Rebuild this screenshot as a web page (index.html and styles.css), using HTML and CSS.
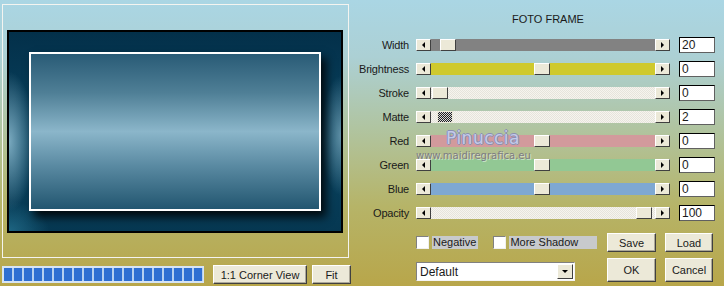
FILE: index.html
```html
<!DOCTYPE html>
<html lang="en">
  <head>
    <meta charset="UTF-8" />
    <title>Foto Frame</title>
    <link rel="stylesheet" href="styles.css">
  </head>
  <body>
    <div class="dialog">
      <div class="left">
        <div class="preview">
          <div class="frame">
            <div class="photo"></div>
          </div>
        </div>
        <div class="preview-bar">
          <div class="progress"></div>
          <button class="btn corner">1:1 Corner View</button>
          <button class="btn fit">Fit</button>
        </div>
      </div>

      <div class="right">
        <div class="title">FOTO FRAME</div>

        <div class="row">
          <div class="label">Width</div>
          <div class="slider">
            <span class="arrow arrow-left"></span>
            <div class="track gray"><span class="thumb" style="margin-left: 9px"></span></div>
            <span class="arrow arrow-right"></span>
          </div>
          <div class="value">20</div>
        </div>
        <div class="row">
          <div class="label">Brightness</div>
          <div class="slider">
            <span class="arrow arrow-left"></span>
            <div class="track yellow"><span class="thumb" style="margin-left: 103px"></span></div>
            <span class="arrow arrow-right"></span>
          </div>
          <div class="value">0</div>
        </div>
        <div class="row">
          <div class="label">Stroke</div>
          <div class="slider">
            <span class="arrow arrow-left"></span>
            <div class="track hatch"><span class="thumb" style="margin-left: 1px"></span></div>
            <span class="arrow arrow-right"></span>
          </div>
          <div class="value">0</div>
        </div>
        <div class="row">
          <div class="label">Matte</div>
          <div class="slider">
            <span class="arrow arrow-left"></span>
            <div class="track hatch"><span class="thumb checker" style="margin-left: 6px"></span></div>
            <span class="arrow arrow-right"></span>
          </div>
          <div class="value">2</div>
        </div>
        <div class="row">
          <div class="label">Red</div>
          <div class="slider">
            <span class="arrow arrow-left"></span>
            <div class="track red"><span class="thumb" style="margin-left: 103px"></span></div>
            <span class="arrow arrow-right"></span>
          </div>
          <div class="value">0</div>
        </div>
        <div class="row">
          <div class="label">Green</div>
          <div class="slider">
            <span class="arrow arrow-left"></span>
            <div class="track green"><span class="thumb" style="margin-left: 103px"></span></div>
            <span class="arrow arrow-right"></span>
          </div>
          <div class="value">0</div>
        </div>
        <div class="row">
          <div class="label">Blue</div>
          <div class="slider">
            <span class="arrow arrow-left"></span>
            <div class="track blue"><span class="thumb" style="margin-left: 103px"></span></div>
            <span class="arrow arrow-right"></span>
          </div>
          <div class="value">0</div>
        </div>
        <div class="row">
          <div class="label">Opacity</div>
          <div class="slider">
            <span class="arrow arrow-left"></span>
            <div class="track hatch"><span class="thumb" style="margin-left: 205px"></span></div>
            <span class="arrow arrow-right"></span>
          </div>
          <div class="value">100</div>
        </div>

        <div class="actions">
          <div class="checks">
            <div class="check"><span class="box"></span><span class="caption">Negative</span></div>
            <div class="check"><span class="box"></span><span class="caption wide">More Shadow</span></div>
          </div>
          <button class="btn">Save</button>
          <button class="btn">Load</button>
          <div class="select">
            <span class="select-text">Default</span>
            <span class="drop"></span>
          </div>
          <button class="btn tall">OK</button>
          <button class="btn tall">Cancel</button>
        </div>

        <!--watermark over the sliders-->
        <div class="watermark">
          <div class="wm-name">Pinuccia</div>
          <div class="wm-site">www.maidiregrafica.eu</div>
        </div>
      </div>
    </div>
  </body>
</html>
```

FILE: styles.css
```css
body {
  margin: 0;
  padding: 0;
  width: 724px;
  height: 286px;
  overflow: hidden;
  font-family: "Liberation Sans", Arial, sans-serif;
  font-size: 11px;
  color: #1a1a1a;
  background: linear-gradient(to bottom, #aad6e4 0%, #acd0d4 20%, #b0c4a0 45%, #b6b468 72%, #b8a64a 100%);
}
.dialog {
  display: flex;
  height: 286px;
}

/* preview side */
.left {
  width: 352px;
  box-sizing: border-box;
  padding: 4px 0 0 2px;
  display: flex;
  flex-direction: column;
}
.preview {
  width: 347px;
  height: 254px;
  box-sizing: border-box;
  border: 1px solid #f4f4f0;
  padding: 25px 0 0 4px;
}
.frame {
  width: 336px;
  height: 203px;
  box-sizing: border-box;
  border: 2px solid #000;
  padding: 20px;
  background:
    radial-gradient(ellipse 26px 70px at 0% 55%, rgba(150, 195, 215, 0.8), rgba(150, 195, 215, 0)),
    radial-gradient(ellipse 20px 60px at 100% 52%, rgba(130, 175, 195, 0.7), rgba(130, 175, 195, 0)),
    radial-gradient(ellipse 40px 30px at 0% 100%, rgba(40, 120, 150, 0.7), rgba(40, 120, 150, 0)),
    linear-gradient(to bottom, #03304a, #0a4460 55%, #063852);
}
.photo {
  width: 292px;
  height: 159px;
  box-sizing: border-box;
  border: 2px solid #fff;
  background: linear-gradient(to bottom, #295b76 0%, #4f7f96 25%, #8bb6ca 50%, #5a8aa2 72%, #225670 100%);
  box-shadow: 5px 6px 9px rgba(0, 0, 0, 0.85);
}
.preview-bar {
  display: flex;
  align-items: center;
  margin-top: 7px;
}
.progress {
  width: 202px;
  height: 17px;
  box-sizing: border-box;
  padding: 2px 1px 2px 2px;
  background:
    repeating-linear-gradient(to right, #2f6fd2 0 8px, #b6d0f0 8px 10px) content-box,
    #d6e4f4;
}
.corner {
  width: 94px;
  height: 19px;
  margin-left: 9px;
}
.fit {
  width: 39px;
  height: 19px;
  margin-left: 5px;
}

/* classic buttons */
.btn {
  font-family: "Liberation Sans", Arial, sans-serif;
  font-size: 11px;
  color: #1a1a1a;
  background: #ece9d8;
  border: 1px solid;
  border-color: #fff #404040 #404040 #fff;
  box-shadow: inset -1px -1px #aca899;
  padding: 0;
  height: 19px;
}
.btn.tall {
  height: 24px;
}

/* controls side */
.right {
  flex: 1;
  position: relative;
}
.title {
  width: 264px;
  margin-left: 64px;
  padding-top: 12px;
  line-height: 15px;
  text-align: center;
  margin-bottom: 6px;
}
.row {
  display: flex;
  align-items: center;
  height: 24px;
}
.label {
  width: 57px;
  text-align: right;
  letter-spacing: -0.2px;
}
.slider {
  display: flex;
  margin-left: 7px;
  height: 12px;
}
.arrow {
  width: 15px;
  height: 12px;
  box-sizing: border-box;
  background: #ece9d8;
  border: 1px solid;
  border-color: #fff #404040 #404040 #fff;
  display: flex;
  align-items: center;
  justify-content: center;
}
.arrow-left::before {
  content: "";
  border-top: 3px solid transparent;
  border-bottom: 3px solid transparent;
  border-right: 3px solid #000;
}
.arrow-right::before {
  content: "";
  border-top: 3px solid transparent;
  border-bottom: 3px solid transparent;
  border-left: 3px solid #000;
}
.track {
  width: 224px;
  height: 12px;
  display: flex;
}
.track.gray {
  background: #828282;
}
.track.yellow {
  background: #cfc92e;
}
.track.red {
  background: #d29a9c;
}
.track.green {
  background: #92c894;
}
.track.blue {
  background: #7ea8d2;
}
.track.hatch {
  background: repeating-conic-gradient(#f6f4ee 0 25%, #e6e4dc 0 50%) 0 0 / 2px 2px;
}
.thumb {
  width: 16px;
  height: 12px;
  box-sizing: border-box;
  background: #ece9d8;
  border: 1px solid;
  border-color: #fff #404040 #404040 #fff;
}
.thumb.checker {
  border: 1px solid #ece9d8;
  background: repeating-conic-gradient(#202020 0 25%, #d8d8d8 0 50%) 0 0 / 2px 2px;
}
.value {
  width: 36px;
  height: 16px;
  box-sizing: border-box;
  margin-left: 9px;
  background: #fff;
  border: 1px solid #000;
  border-right-color: #606060;
  border-bottom-color: #606060;
  padding-left: 2px;
  font-size: 12px;
  line-height: 14px;
}

/* bottom block */
.actions {
  display: grid;
  grid-template-columns: 182px 49px 48px;
  grid-template-rows: 19px 24px;
  column-gap: 9px;
  row-gap: 6px;
  margin: 8px 0 0 64px;
}
.checks {
  display: flex;
  align-items: center;
}
.check {
  display: flex;
  align-items: center;
  margin-right: 15px;
}
.box {
  width: 13px;
  height: 13px;
  box-sizing: border-box;
  background: #fff;
  border: 1px solid;
  border-color: #808080 #f0f0f0 #f0f0f0 #808080;
}
.caption {
  margin-left: 3px;
  height: 13px;
  line-height: 13px;
  background: #c8cacc;
  padding: 0 2px 0 1px;
}
.caption.wide {
  width: 88px;
  box-sizing: border-box;
}
.select {
  align-self: end;
  margin-bottom: 1px;
  width: 159px;
  height: 19px;
  box-sizing: border-box;
  background: #fff;
  border: 1px solid;
  border-color: #808080 #f4f4f4 #f4f4f4 #808080;
  display: flex;
  align-items: center;
  justify-content: space-between;
  padding: 0 1px 0 3px;
}
.select-text {
  font-size: 12px;
}
.drop {
  width: 16px;
  height: 15px;
  box-sizing: border-box;
  background: #ece9d8;
  border: 1px solid;
  border-color: #fff #404040 #404040 #fff;
  display: flex;
  align-items: center;
  justify-content: center;
}
.drop::before {
  content: "";
  border-left: 3px solid transparent;
  border-right: 3px solid transparent;
  border-top: 3px solid #000;
}

/* watermark */
.watermark {
  position: absolute;
  left: 64px;
  top: 128px;
  pointer-events: none;
}
.wm-name {
  margin-left: 30px;
  font-family: "DejaVu Sans", sans-serif;
  font-size: 17px;
  letter-spacing: 0.5px;
  color: #c4cae8;
  text-shadow: -1px 0 #8a90b4, 1px 0 #8a90b4, 0 -1px #8a90b4, 0 1px #8a90b4;
  line-height: 20px;
}
.wm-site {
  font-family: "DejaVu Sans", sans-serif;
  font-size: 10px;
  color: #7c7c84;
  text-shadow: 1px 1px rgba(255, 255, 255, 0.5);
  line-height: 12px;
  margin-top: 2px;
}
```
